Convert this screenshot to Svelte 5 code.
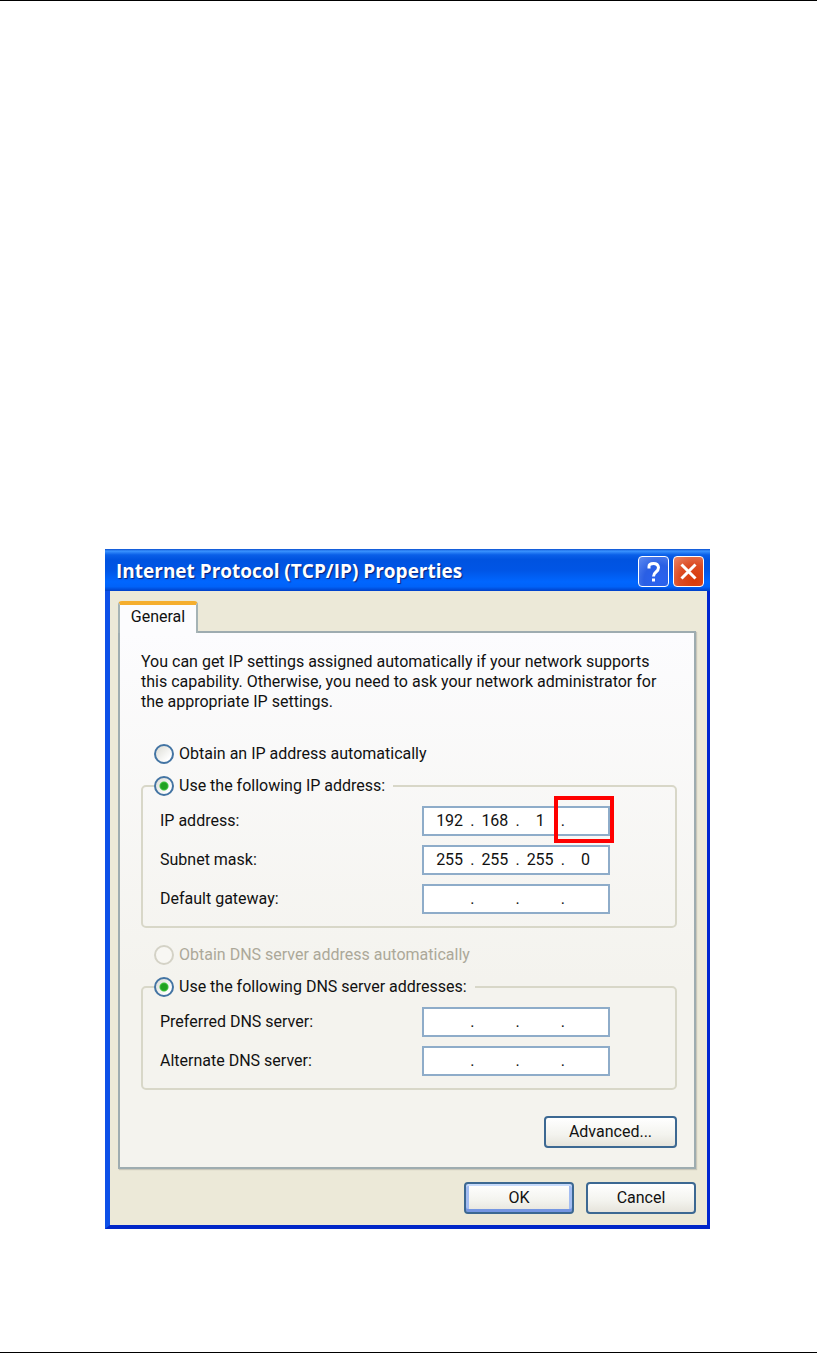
<script>
let ip_mode = 'manual';
let dns_mode = 'manual';

const ip_rows = [
    {id: 'ip', label: 'IP address:', octets: ['192', '168', '1', ''], marked: true},
    {id: 'mask', label: 'Subnet mask:', octets: ['255', '255', '255', '0']},
    {id: 'gateway', label: 'Default gateway:', octets: ['', '', '', '']},
];
const dns_rows = [
    {id: 'dns1', label: 'Preferred DNS server:', octets: ['', '', '', '']},
    {id: 'dns2', label: 'Alternate DNS server:', octets: ['', '', '', '']},
];
const groups = {ip: ip_rows, dns: dns_rows};
</script>

<div class="page">
  <div class="dialog" role="dialog" aria-labelledby="title">
    <header>
      <h1 id="title">Internet Protocol (TCP/IP) Properties</h1>
      <button class="caption help" aria-label="Help">
        <svg viewBox="0 0 31 31">
          <path d="M10 11.500V9.500Q10 6.500 14.500 6.500T19.500 10.500Q19.500 13 17 15T14.500 19.500" />
          <path d="M14.500 21.500V24.500" />
        </svg>
      </button>
      <button class="caption close" aria-label="Close">
        <svg viewBox="0 0 31 31"><path d="M7.500 7.500L21.500 21.500M21.500 7.500L7.500 21.500" /></svg>
      </button>
    </header>

    <main>
      <div role="tablist">
        <button class="tab" role="tab" aria-selected="true">General</button>
      </div>
      <div class="panel" role="tabpanel">
        <p>You can get IP settings assigned automatically if your network supports this capability. Otherwise, you need to ask your network administrator for the appropriate IP settings.</p>

        <label class="radio">
          <input type="radio" name="ip_mode" value="auto" bind:group={ip_mode}>Obtain an IP address automatically
        </label>
        <fieldset>
          <legend>
            <label class="radio">
              <input type="radio" name="ip_mode" value="manual" bind:group={ip_mode}>Use the following IP address:
            </label>
          </legend>
          {@render rows(groups.ip)}
        </fieldset>

        <label class="radio disabled">
          <input type="radio" name="dns_mode" value="auto" bind:group={dns_mode} disabled>Obtain DNS server address automatically
        </label>
        <fieldset>
          <legend>
            <label class="radio">
              <input type="radio" name="dns_mode" value="manual" bind:group={dns_mode}>Use the following DNS server addresses:
            </label>
          </legend>
          {@render rows(groups.dns)}
        </fieldset>

        <div class="actions">
          <button class="btn advanced">Advanced...</button>
        </div>
      </div>
      <footer>
        <button class="btn default">OK</button>
        <button class="btn">Cancel</button>
      </footer>
    </main>
  </div>
</div>

{#snippet rows(list)}
  {#each list as row}
    <div class="row">
      <label for="{row.id}-0">{row.label}</label>
      <div class="address">
        {#each row.octets as octet, i}
          {#if i > 0}<span class="dot">.</span>{/if}
          <input id="{row.id}-{i}" type="text" maxlength="3" aria-label="{row.label} part {i + 1}" bind:value={row.octets[i]}>
        {/each}
        {#if row.marked}<span class="mark"></span>{/if}
      </div>
    </div>
  {/each}
{/snippet}

<style>
:global(body) {
  background: #fff;
}
.page {
  box-sizing: border-box;
  min-height: 100vh;
  padding: 548px 107px 123px 105px;
  border-top: 1px solid #000;
  border-bottom: 1px solid #000;
  font: 16px/20px Roboto, "Liberation Sans", sans-serif;
  color: #111;
}
button, input {
  box-sizing: border-box;
  margin: 0;
  font: inherit;
  color: inherit;
}
.dialog {
  background: #ece9d8;
  border-style: solid;
  border-width: 0 3px 4px 5px;
  border-color: #0831d9 #0026d0 #0026c8 #0d50e8;
}
header {
  display: flex;
  align-items: center;
  gap: 4px;
  height: 42px;
  box-sizing: border-box;
  margin: 0 -3px 0 -5px;
  padding: 2px 6px 0 11px;
  background: linear-gradient(#0a4fd0, #3a93ff 5%, #0a5fe8 14%, #0053e0 25%, #0055e5 50%, #0066ff 78%, #0062f8 90%, #0040c8);
}
h1 {
  flex: 1;
  margin: 0;
  font: bold 19px/24px "Open Sans", "Noto Sans", sans-serif;
  color: #fff;
  text-shadow: 1px 1px 1px #0a1f7a;
}
.caption {
  width: 31px;
  height: 31px;
  padding: 0;
  border: 1px solid #fff;
  border-radius: 4px;
}
.help {
  background: radial-gradient(circle at 70% 80%, #2a62f0, #2a5fe4 50%, #5f8cf0);
}
.close {
  background: radial-gradient(circle at 70% 80%, #d83a08, #dc4c24 50%, #ea8668);
}
.caption svg {
  display: block;
  width: 31px;
  height: 31px;
  fill: none;
  stroke: #fff;
  stroke-width: 3;
}
main {
  padding: 10px 11px 11px 8px;
}
[role="tablist"] {
  display: flex;
}
.tab {
  position: relative;
  z-index: 1;
  width: 80px;
  height: 32px;
  margin-bottom: -2px;
  padding: 0 0 4px;
  background: #fcfcfe;
  border: 2px solid #a5b3b5;
  border-top: 4px solid #f5ae2e;
  border-bottom: 0;
  border-radius: 4px 4px 0 0;
}
.panel {
  padding: 19px 17px 19px 21px;
  background: linear-gradient(#fcfcfe, #f4f3ee 65%);
  border: 2px solid #9eacb0;
  box-shadow: 1px 1px 1px #c9c7ba;
}
p {
  margin: 0 0 32px;
}
.radio {
  display: flex;
  align-items: center;
  gap: 5px;
}
.panel > .radio {
  margin: 0 0 12px 13px;
}
.radio input {
  appearance: none;
  width: 20px;
  height: 20px;
  border: 2px solid #4374a3;
  border-radius: 50%;
  background: linear-gradient(135deg, #dcdcd5, #fff 80%);
}
.radio input:checked {
  background: radial-gradient(circle, #21a121 3px, #3fc43f 4px, transparent 5px), linear-gradient(135deg, #dcdcd5, #fff 80%);
}
.disabled {
  color: #aca899;
}
.radio input:disabled {
  border-color: #d4d2c6;
  background: #f8f7f3;
}
fieldset {
  min-width: 0;
  margin: 0 0 17px;
  padding: 10px 65px 12px 17px;
  border: 2px solid #d8d7c8;
  border-radius: 5px;
}
fieldset + .disabled {
  margin-bottom: 14px;
}
legend {
  margin-left: -6px;
  padding: 0 8px 0 0;
}
.row {
  display: flex;
  align-items: center;
  justify-content: space-between;
}
.row + .row {
  margin-top: 9px;
}
.address {
  position: relative;
  display: flex;
  align-items: center;
  box-sizing: border-box;
  width: 188px;
  height: 30px;
  padding: 0 2px 0 5px;
  background: #fff;
  border: 2px solid #8eacc9;
}
.address input {
  flex: 1;
  min-width: 0;
  width: 0;
  padding: 0;
  border: 0;
  background: none;
  text-align: center;
}
.address input:focus {
  outline: 0;
}
.dot {
  width: 4px;
}
/* callout round the last octet */
.mark {
  position: absolute;
  top: -12px;
  right: -6px;
  box-sizing: border-box;
  width: 60px;
  height: 47px;
  border: 4px solid #f00;
  pointer-events: none;
}
.actions {
  display: flex;
  justify-content: flex-end;
  margin-top: 26px;
}
.btn {
  width: 110px;
  height: 32px;
  padding: 0;
  background: linear-gradient(#fff, #f3f3ee 60%, #e6e4dc);
  border: 2px solid #3c6892;
  border-radius: 4px;
}
.advanced {
  width: 133px;
}
.default {
  box-shadow: inset 0 2px #c6dafb, inset 0 -3px #7596e2, inset 3px 0 #a3bdf2, inset -3px 0 #a3bdf2;
}
footer {
  display: flex;
  justify-content: flex-end;
  gap: 12px;
  padding-top: 13px;
}
</style>
